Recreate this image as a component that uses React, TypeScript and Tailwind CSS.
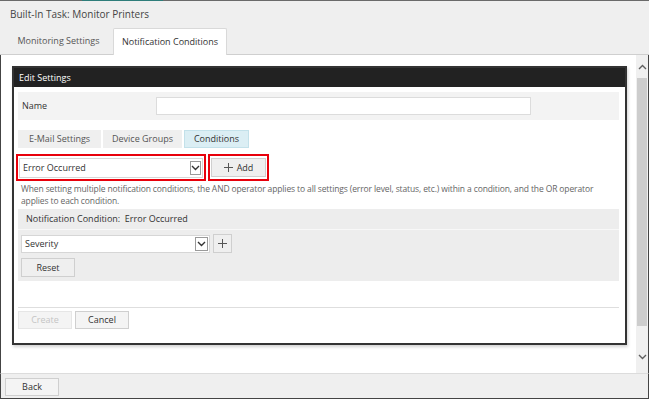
import React from "react";

function Chevron({ up = false, className = "" }: { up?: boolean; className?: string }) {
  return (
    <svg width="9" height="6" viewBox="0 0 9 6" className={className}>
      <polyline
        points={up ? "1,5 4.5,1.5 8,5" : "1,1 4.5,4.5 8,1"}
        fill="none"
        stroke="currentColor"
        strokeWidth="1.4"
      />
    </svg>
  );
}

function SelectBox({ label, w, h, boxW }: { label: string; w: string; h: string; boxW: string }) {
  return (
    <div className={`${w} ${h} bg-white border border-[#d6d6d6] flex items-center justify-between pl-[3px] pr-[1px]`}>
      <span className="text-[#333]">{label}</span>
      <span className={`${boxW} h-[14px] border border-[#9a9a9a] bg-white flex items-center justify-center text-[#333]`}>
        <Chevron />
      </span>
    </div>
  );
}

function PlusIcon() {
  return (
    <svg width="9" height="9" viewBox="0 0 9 9">
      <line x1="4.5" y1="0" x2="4.5" y2="9" stroke="#555" strokeWidth="1" />
      <line x1="0" y1="4.5" x2="9" y2="4.5" stroke="#555" strokeWidth="1" />
    </svg>
  );
}

export default function App() {
  return (
    <div className="w-[649px] h-[399px] flex flex-col bg-[#efefef] font-['Open_Sans',sans-serif] text-[9px] text-[#333] overflow-hidden">
      {/* top strip */}
      <div className="h-px flex shrink-0">
        <div className="w-[82px] bg-[#6a6a6a]" />
        <div className="w-[81px] bg-[#2e7d7a]" />
        <div className="flex-1 bg-[#6a6a6a]" />
      </div>

      {/* header */}
      <div className="h-[54px] shrink-0 flex flex-col border-b border-[#cfcfcf]">
        <div className="h-[27px] pl-[10px] pt-[6px] text-[10px] text-[#444]">Built-In Task: Monitor Printers</div>
        <div className="flex items-end h-[26px] pl-[4px]">
          <div className="w-[109px] h-full flex items-center justify-center text-[#555]">Monitoring Settings</div>
          <div className="w-[114px] h-[27px] -mb-px bg-white border border-b-0 border-[#d9d9d9] rounded-t-[2px] flex items-center justify-center text-[#333] relative">
            Notification Conditions
          </div>
        </div>
      </div>

      {/* content */}
      <div className="flex-1 flex border-l border-r border-[#444] min-h-0">
        <div className="flex-1 bg-white pl-[11px] pt-[11px]">
          <div className="w-[615px] h-[279px] border-2 border-[#333] bg-white flex flex-col shadow-[1px_2px_3px_rgba(0,0,0,0.18)]">
            <div className="h-[19px] bg-[#222] text-white pl-[5px] flex items-center shrink-0">Edit Settings</div>
            <div className="flex flex-col pl-[4px] pr-[6px] pt-[5px]">
              {/* Name row */}
              <div className="h-[28px] bg-[#f3f3f3] flex items-center">
                <div className="w-[138px] pl-[4px] text-[#333]">Name</div>
                <div className="w-[375px] h-[18px] bg-white border border-[#dcdcdc]" />
              </div>

              {/* Sub tabs */}
              <div className="mt-[10px] h-[18px] flex gap-[2px]">
                <div className="w-[83px] bg-[#efefef] flex items-center justify-center text-[#555]">E-Mail Settings</div>
                <div className="w-[79px] bg-[#efefef] flex items-center justify-center text-[#555]">Device Groups</div>
                <div className="w-[65px] bg-[#dbeef4] border border-[#c3e1ea] flex items-center justify-center text-[#333]">Conditions</div>
              </div>

              {/* select + add */}
              <div className="mt-[6px] flex gap-[2px] -ml-[2px]">
                <div className="w-[190px] h-[27px] border-2 border-[#e8000b] flex items-center justify-center">
                  <SelectBox label="Error Occurred" w="w-[184px]" h="h-[20px]" boxW="w-[11px]" />
                </div>
                <div className="w-[61px] h-[27px] border-2 border-[#e8000b] flex items-center justify-center">
                  <div className="w-[55px] h-[19px] bg-[#efefef] border border-[#cfcfcf] flex items-center justify-center gap-[4px] text-[#333]">
                    <PlusIcon />
                    <span>Add</span>
                  </div>
                </div>
              </div>

              {/* description */}
              <div className="mt-[2px] pl-[3px] text-[#666] text-[8.5px] tracking-[-0.12px] leading-[12px]">
                When setting multiple notification conditions, the AND operator applies to all settings (error level, status, etc.) within a condition, and the OR operator applies to each condition.
              </div>

              {/* condition box */}
              <div className="mt-[2px] bg-[#ededed] flex flex-col">
                <div className="h-[21px] flex items-center pl-[8px] text-[#333] border-b border-[#f8f8f8]">
                  Notification Condition:&nbsp;&nbsp;Error Occurred
                </div>
                <div className="pl-[3px] pt-[4px] pb-[4px] flex flex-col">
                  <div className="flex items-center gap-[3px]">
                    <SelectBox label="Severity" w="w-[189px]" h="h-[18px]" boxW="w-[13px]" />
                    <div className="w-[19px] h-[19px] bg-[#efefef] border border-[#cfcfcf] flex items-center justify-center">
                      <PlusIcon />
                    </div>
                  </div>
                  <div className="mt-[5px] w-[54px] h-[19px] bg-[#efefef] border border-[#cfcfcf] flex items-center justify-center text-[#333]">
                    Reset
                  </div>
                </div>
              </div>

              {/* footer of panel */}
              <div className="mt-[26px] border-t border-[#dedede] pt-[3px] flex gap-[3px]">
                <div className="w-[54px] h-[18px] bg-[#f4f4f4] border border-[#e6e6e6] flex items-center justify-center text-[#c4c4c4]">
                  Create
                </div>
                <div className="w-[54px] h-[18px] bg-[#f4f4f4] border border-[#cfcfcf] flex items-center justify-center text-[#333]">
                  Cancel
                </div>
              </div>
            </div>
          </div>
        </div>

        {/* scrollbar */}
        <div className="w-[12px] bg-[#f0f0f0] flex flex-col items-center">
          <div className="h-[23px] flex items-center justify-center text-[#606060]">
            <Chevron up />
          </div>
          <div className="w-[10px] h-[248px] bg-[#cdcdcd]" />
          <div className="flex-1" />
          <div className="h-[30px] flex items-center justify-center text-[#606060] pb-[2px]">
            <Chevron />
          </div>
        </div>
      </div>

      {/* footer */}
      <div className="h-[26px] shrink-0 bg-[#efefef] border-t border-[#dcdcdc] border-l border-r border-b border-l-[#444] border-r-[#444] border-b-[#444] pl-[4px] pt-[4px]">
        <div className="w-[54px] h-[18px] bg-[#f4f4f4] border border-[#cfcfcf] flex items-center justify-center text-[#333]">
          Back
        </div>
      </div>
    </div>
  );
}
